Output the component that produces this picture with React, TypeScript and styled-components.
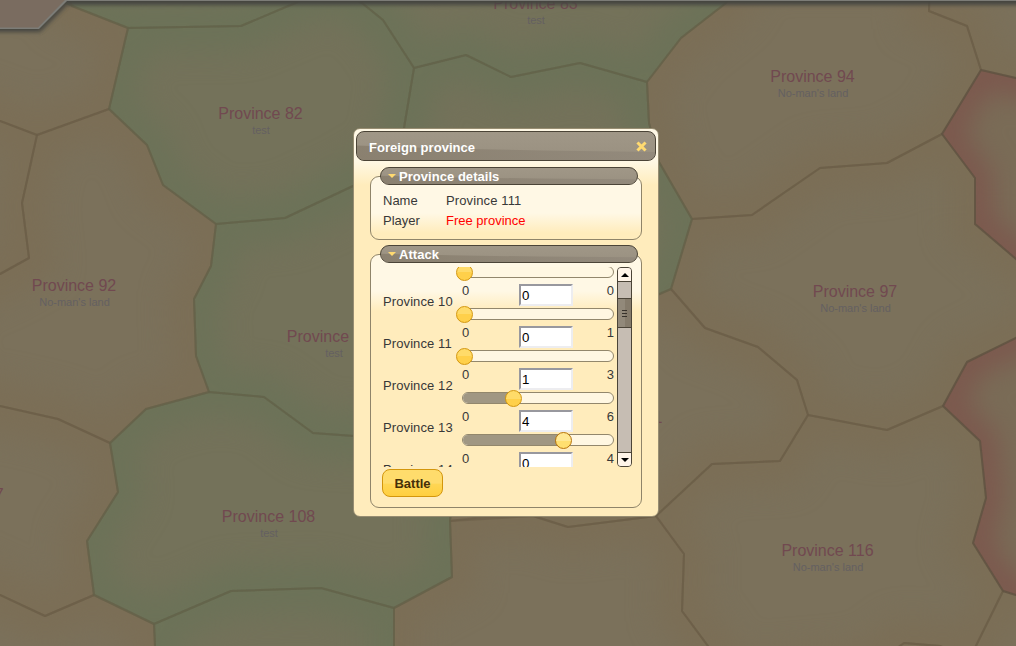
import React from "react";
import styled, { createGlobalStyle } from "styled-components";

const GlobalStyle = createGlobalStyle`
  html, body { margin: 0; padding: 0; background: #7b6f57; overflow: hidden; }
  * { box-sizing: border-box; }
  body { font-family: "Liberation Sans", Arial, sans-serif; font-size: 13px; color: #383838; }
`;

type Tone = "green" | "brown" | "red";

const TONES: Record<Tone, { core: string; edge: string }> = {
  green: { core: "#74725a", edge: "#6c7258" },
  brown: { core: "#7b715b", edge: "#7b6e56" },
  red: { core: "#7a6c57", edge: "#7c574d" },
};

const PROVINCES: { tone: Tone; points: string }[] = [
  { tone: "brown", points: "0,121 37,135 109,109 128,28 72,6 60,-20 -60,-20 -60,100" },
  { tone: "brown", points: "0,121 37,135 22,203 29,258 0,274 -60,300 -60,100" },
  { tone: "brown", points: "37,135 109,109 147,145 163,185 216,224 211,266 194,299 196,356 209,392 146,409 110,443 58,419 0,406 -50,400 -60,300 0,274 29,258 22,203" },
  { tone: "brown", points: "0,406 58,419 110,443 118,492 87,541 94,595 45,616 0,595 -80,560 -80,400" },
  { tone: "brown", points: "0,595 45,616 94,595 154,624 155,646 157,720 -60,720 -80,560" },
  { tone: "brown", points: "450,521 483,517 533,516 568,527 656,516 684,554 682,611 708,646 750,720 394,720 394,608 452,577" },
  { tone: "brown", points: "671,289 705,328 758,347 797,380 808,415 780,461 712,464 656,516 568,527 533,516 450,521 460,430 500,300 600,320" },
  { tone: "brown", points: "692,219 752,215 820,168 887,163 942,134 975,178 975,224 1016,259 1080,300 1016,338 967,362 943,406 887,430 808,415 797,380 758,347 705,328 671,289" },
  { tone: "brown", points: "647,82 681,38 726,3 750,-40 930,-40 929,11 967,26 981,70 942,134 887,163 820,168 752,215 692,219 659,162 649,123" },
  { tone: "brown", points: "930,-40 929,11 967,26 981,70 1016,78 1080,90 1080,-40" },
  { tone: "brown", points: "808,415 887,430 943,406 980,441 986,498 973,543 1003,591 970,658 940,646 904,643 870,668 730,680 708,646 682,611 684,554 656,516 712,464 780,461" },
  { tone: "brown", points: "904,643 940,646 970,658 970,720 860,720 870,668" },
  { tone: "brown", points: "1003,591 1016,595 1100,600 1100,720 970,720 970,658" },
  { tone: "green", points: "128,28 241,26 300,1 331,-12 362,3 383,20 414,68 404,128 398,160 353,186 285,218 216,224 163,185 147,145 109,109" },
  { tone: "green", points: "128,28 241,26 300,1 331,-12 300,-60 60,-60 60,0 72,6" },
  { tone: "green", points: "362,3 383,20 414,68 466,55 511,77 580,63 647,82 681,38 726,3 750,-40 331,-60 331,-12" },
  { tone: "green", points: "414,68 466,55 511,77 580,63 647,82 649,123 659,162 692,219 671,289 600,320 500,300 398,160 404,128" },
  { tone: "green", points: "216,224 285,218 353,186 398,160 500,300 460,430 354,436 313,433 264,397 209,392 196,356 194,299 211,266" },
  { tone: "green", points: "209,392 264,397 313,433 354,436 460,430 450,521 452,577 394,608 321,588 231,591 154,624 94,595 87,541 118,492 110,443 146,409" },
  { tone: "green", points: "154,624 231,591 321,588 394,608 394,720 157,720 155,646" },
  { tone: "red", points: "981,70 1016,78 1090,95 1090,300 1016,259 975,224 975,178 942,134" },
  { tone: "red", points: "943,406 967,362 1016,338 1080,300 1110,620 1016,595 1003,591 973,543 986,498 980,441" },
];

const PINS = [
  { x: 260.5, y: 105, name: "Province 82", owner: "test" },
  { x: 535.5, y: -5, name: "Province 83", owner: "test" },
  { x: 812.5, y: 68, name: "Province 94", owner: "No-man's land" },
  { x: 74, y: 277, name: "Province 92", owner: "No-man's land" },
  { x: 333.5, y: 328, name: "Province 109", owner: "test" },
  { x: 855, y: 283, name: "Province 97", owner: "No-man's land" },
  { x: 268.5, y: 508, name: "Province 108", owner: "test" },
  { x: 827.5, y: 542, name: "Province 116", owner: "No-man's land" },
  { x: 617, y: 409, name: "Province 111", owner: "" },
  { x: -43, y: 486, name: "Province 107", owner: "" },
];

const World = styled.main`
  position: relative;
  width: 1016px;
  height: 646px;
  overflow: hidden;
`;

const MapSvg = styled.svg`
  display: block;
`;

const Pin = styled.div<{ $x: number; $y: number }>`
  position: absolute;
  left: ${(p) => p.$x}px;
  top: ${(p) => p.$y}px;
  transform: translateX(-50%);
  text-align: center;
  white-space: nowrap;
`;

const PinName = styled.div`
  font-size: 16px;
  line-height: 18px;
  color: #714950;
`;

const PinOwner = styled.div`
  font-size: 11px;
  line-height: 13px;
  margin-top: 1px;
  padding-left: 1px;
  color: #646061;
`;

const FrameSvg = styled.svg`
  position: absolute;
  top: 0;
  left: 0;
`;

const Dialog = styled.section`
  position: absolute;
  left: 353px;
  top: 128px;
  width: 306px;
  height: 389px;
  padding: 2px;
  border: 1px solid #978d72;
  border-radius: 7px;
  background: linear-gradient(#fff8e5 0 32px, #ffecbc 56px);
`;

const Bar = styled.div`
  position: relative;
  overflow: hidden;
  display: flex;
  align-items: center;
  border: 1px solid #4b4437;
  background: linear-gradient(#a09787, #999080);
  color: #fff;
  font-weight: bold;
`;

const TitleBar = styled(Bar)`
  height: 30px;
  border-radius: 8px;
  padding: 2px 8px 0 12px;
  justify-content: space-between;
`;

const Legend = styled(Bar)`
  z-index: 1;
  height: 18px;
  margin: 0 4px 0 10px;
  padding: 0 0 0 7px;
  gap: 3px;
  border-radius: 9px;
`;

const GlossSvg = styled.svg`
  position: absolute;
  inset: 0;
  width: 100%;
  height: 100%;
`;

const BarText = styled.span`
  position: relative;
  line-height: 15px;
  white-space: nowrap;
  letter-spacing: 0.04px;
`;

const BarIcon = styled.svg`
  position: relative;
  display: block;
`;

const CloseIcon = styled(BarIcon)`
  margin-bottom: 2px;
`;

const Section = styled.div<{ $gap: number }>`
  display: flex;
  flex-direction: column;
  margin: ${(p) => p.$gap}px 14px 0;
`;

const Panel = styled.div<{ $height: number; $pad: string }>`
  height: ${(p) => p.$height}px;
  margin-top: -9px;
  padding: ${(p) => p.$pad};
  border: 1px solid #8f8469;
  border-radius: 9px;
  background: linear-gradient(#fff8e5 0 36px, #ffecbc 56px);
`;

const Detail = styled.div`
  display: grid;
  grid-template-columns: 63px 1fr;
  line-height: 20px;
`;

const Wide = styled.span`
  letter-spacing: 0.12px;
`;

const Free = styled.span`
  color: #f00;
`;

const ScrollPane = styled.div`
  display: flex;
  width: 250px;
  height: 200px;
  overflow: hidden;
`;

const Rows = styled.div`
  flex: 1;
  margin-top: -25px;
`;

const Row = styled.div`
  display: grid;
  grid-template-columns: 79px 152px;
  height: 42px;
  padding-left: 1px;
`;

const RowName = styled.div`
  padding-top: 10px;
  line-height: 15px;
  letter-spacing: 0.1px;
`;

const Values = styled.div`
  display: grid;
  grid-template-columns: 57px 54px 1fr;
  height: 24px;
  line-height: 14px;
`;

const Max = styled.span`
  text-align: right;
`;

const Count = styled.input`
  width: 54px;
  height: 22px;
  margin: 0;
  padding: 1px 1px 0;
  border: 2px solid;
  border-color: #98989e #ededf0 #ededf0 #98989e;
  background: #fff;
  color: #000;
  font: 13.3px "Liberation Sans", Arial, sans-serif;
  outline: 0;
`;

const Track = styled.div`
  position: relative;
  height: 12px;
  border: 1px solid #92876c;
  border-radius: 6px;
  background: #fff7e2;
`;

const Fill = styled.div`
  height: 10px;
  border-radius: 5px 0 0 5px;
  background: #a09783;
`;

const Thumb = styled.div<{ $hot?: boolean }>`
  position: absolute;
  top: -3px;
  width: 17px;
  height: 17px;
  margin-left: -7px;
  border: 1px solid ${(p) => (p.$hot ? "#b87408" : "#d3960c")};
  border-radius: 50%;
  background: ${(p) =>
    p.$hot
      ? "linear-gradient(#ffe894 50%, #ffdf70 50%)"
      : "linear-gradient(#ffdb69 50%, #ffd04a 50%)"};
`;

const Scrollbar = styled.div`
  display: flex;
  flex-direction: column;
  width: 15px;
  border: 1px solid #4b4437;
  border-radius: 4px;
  background: #c6bdb3;
  overflow: hidden;
`;

const Arrow = styled.div<{ $down?: boolean }>`
  display: grid;
  place-items: center;
  height: 14px;
  background: #fff5e9;
  border-${(p) => (p.$down ? "top" : "bottom")}: 1px solid #4b4437;
`;

const Grip = styled.div`
  display: flex;
  flex-direction: column;
  align-items: center;
  justify-content: center;
  gap: 2px;
  height: 30px;
  margin: 16px 0 auto;
  border: solid #4b4437;
  border-width: 1px 0;
  background: linear-gradient(90deg, #92897a 0 7px, #857b6b 7px);
`;

const GripLine = styled.i`
  width: 5px;
  height: 1px;
  background: #37322b;
`;

const Battle = styled.button`
  display: block;
  width: 61px;
  height: 28px;
  margin-top: 2px;
  padding: 0;
  border: 1px solid #d3960c;
  border-radius: 8px;
  background: linear-gradient(#ffdc6c 0 50%, #ffd654 55%, #ffcf3f);
  color: #452f08;
  font: bold 13px "Liberation Sans", Arial, sans-serif;
`;

const Gloss = () => (
  <GlossSvg viewBox="0 0 100 100" preserveAspectRatio="none">
    <defs>
      <linearGradient id="gloss" x1="0" x2="1" y1="0" y2="0">
        <stop offset="0" stopColor="#857b6a" />
        <stop offset="1" stopColor="#90877a" />
      </linearGradient>
    </defs>
    <path d="M0 48Q45 66 100 71V100H0Z" fill="url(#gloss)" opacity="0.75" />
  </GlossSvg>
);

const Triangle = ({ up, fill, w, h }: { up?: boolean; fill: string; w: number; h: number }) => (
  <BarIcon width={w} height={h} viewBox="0 0 8 4" preserveAspectRatio="none">
    <path d={up ? "M0 4L4 0L8 4Z" : "M0 0H8L4 4Z"} fill={fill} />
  </BarIcon>
);

const ATTACKERS = [
  { name: "", value: 0, max: 0 },
  { name: "Province 10", value: 0, max: 0 },
  { name: "Province 11", value: 0, max: 1 },
  { name: "Province 12", value: 1, max: 3 },
  { name: "Province 13", value: 4, max: 6 },
  { name: "Province 14", value: 0, max: 4 },
];

const Attacker = ({ name, value, max }: { name: string; value: number; max: number }) => {
  const offset = max ? (value / max) * 149 : 0;
  return (
    <Row>
      <RowName>{name}</RowName>
      <div>
        <Values>
          {name && (
            <>
              <span>0</span>
              <Count defaultValue={value} />
              <Max>{max}</Max>
            </>
          )}
        </Values>
        <Track>
          <Fill style={{ width: offset }} />
          <Thumb $hot={value === 4} style={{ left: Math.floor(offset) }} />
        </Track>
      </div>
    </Row>
  );
};

export default function App() {
  return (
    <World>
      <GlobalStyle />
      <MapSvg width="1016" height="646" viewBox="0 0 1016 646">
        <defs>
          <filter
            id="soft"
            filterUnits="userSpaceOnUse"
            x="-120"
            y="-120"
            width="1280"
            height="900"
            colorInterpolationFilters="sRGB"
          >
            <feGaussianBlur stdDeviation="14" />
          </filter>
          {PROVINCES.map((p, i) => (
            <clipPath id={`c${i}`} key={i}>
              <polygon points={p.points} />
            </clipPath>
          ))}
        </defs>
        {PROVINCES.map((p, i) => (
          <g clipPath={`url(#c${i})`} key={i}>
            <polygon points={p.points} fill={TONES[p.tone].core} />
            <polygon
              points={p.points}
              fill="none"
              stroke={TONES[p.tone].edge}
              strokeWidth={p.tone === "red" ? 34 : 50}
              filter="url(#soft)"
            />
          </g>
        ))}
        {PROVINCES.map((p, i) => (
          <polygon
            key={i}
            points={p.points}
            fill="none"
            stroke={p.tone === "green" ? "#62624a" : p.tone === "red" ? "#5c4f40" : "#6b5e47"}
            strokeWidth="2"
            strokeOpacity="0.6"
            strokeLinejoin="round"
          />
        ))}
      </MapSvg>
      {PINS.map((p) => (
        <Pin key={p.name} $x={p.x} $y={p.y}>
          <PinName>{p.name}</PinName>
          <PinOwner>{p.owner}</PinOwner>
        </Pin>
      ))}
      <FrameSvg width="1016" height="46" viewBox="0 0 1016 46">
        <defs>
          <filter id="shade" filterUnits="userSpaceOnUse" x="-30" y="-30" width="1080" height="90">
            <feGaussianBlur stdDeviation="2" />
          </filter>
        </defs>
        <path
          d="M-20 -20H1040V5H67L40 32H-20Z"
          fill="#45453f"
          filter="url(#shade)"
        />
        <path d="M0 0H1016V1H67L39 29H0Z" fill="#7c7c77" />
        <path d="M0 0H65L38 27.5H0Z" fill="#7a6c60" />
      </FrameSvg>

      <Dialog>
        <TitleBar>
          <Gloss />
          <BarText>Foreign province</BarText>
          <CloseIcon width="11" height="11" viewBox="0 0 11 11">
            <path
              d="M2.5 2.5L8.5 8.5M8.5 2.5L2.5 8.5"
              stroke="#ffda70"
              strokeWidth="3"
              strokeLinecap="square"
            />
          </CloseIcon>
        </TitleBar>
        <Section $gap={6}>
          <Legend>
            <Gloss />
            <Triangle fill="#ffda70" w={8} h={4} />
            <BarText>Province details</BarText>
          </Legend>
          <Panel $height={64} $pad="14px 12px 0">
            <Detail>
              <span>Name</span>
              <Wide>Province 111</Wide>
            </Detail>
            <Detail>
              <span>Player</span>
              <Free>Free province</Free>
            </Detail>
          </Panel>
        </Section>
        <Section $gap={5}>
          <Legend>
            <Gloss />
            <Triangle fill="#ffda70" w={8} h={4} />
            <BarText>Attack</BarText>
          </Legend>
          <Panel $height={254} $pad="12px 9px 0 11px">
            <ScrollPane>
              <Rows>
                {ATTACKERS.map((a) => (
                  <Attacker key={a.name} {...a} />
                ))}
              </Rows>
              <Scrollbar>
                <Arrow>
                  <Triangle up fill="#000" w={8} h={4} />
                </Arrow>
                <Grip>
                  <GripLine />
                  <GripLine />
                  <GripLine />
                </Grip>
                <Arrow $down>
                  <Triangle fill="#000" w={8} h={4} />
                </Arrow>
              </Scrollbar>
            </ScrollPane>
            <Battle>Battle</Battle>
          </Panel>
        </Section>
      </Dialog>
    </World>
  );
}
